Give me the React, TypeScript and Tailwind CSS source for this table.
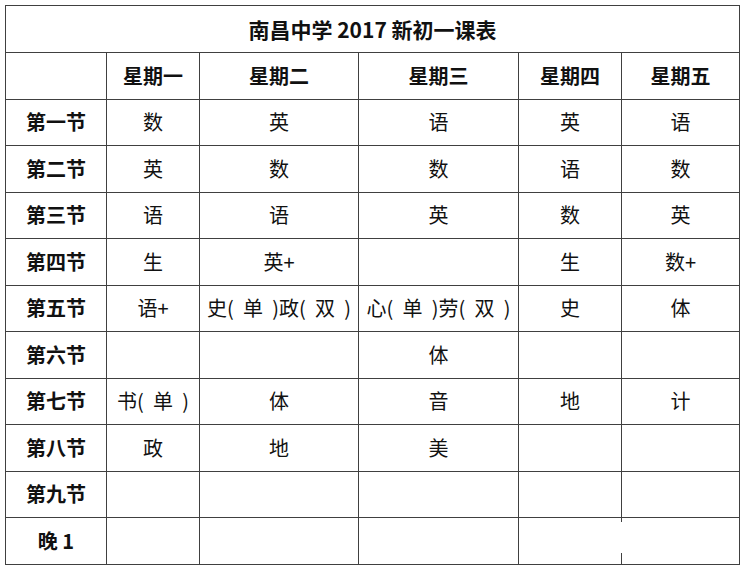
import React from 'react';

const days = ['星期一', '星期二', '星期三', '星期四', '星期五'];

const rows: [string, string[]][] = [
  ['第一节', ['数', '英', '语', '英', '语']],
  ['第二节', ['英', '数', '数', '语', '数']],
  ['第三节', ['语', '语', '英', '数', '英']],
  ['第四节', ['生', '英+', '', '生', '数+']],
  ['第五节', ['语+', '史(单)政(双)', '心(单)劳(双)', '史', '体']],
  ['第六节', ['', '', '体', '', '']],
  ['第七节', ['书(单)', '体', '音', '地', '计']],
  ['第八节', ['政', '地', '美', '', '']],
  ['第九节', ['', '', '', '', '']],
  ['晚 1', ['', '', '', '', '']],
];

// parens in the source sit at the outer side of their box, with room inside
const cellText = (s: string) =>
  s.split('').map((ch, i) => {
    if (ch === '(') return <span key={i} className="inline-block w-[16px] text-left">(</span>;
    if (ch === ')') return <span key={i} className="inline-block w-[16px] text-right">)</span>;
    return <span key={i}>{ch}</span>;
  });

const App: React.FC = () => {
  return (
    <div className="relative w-[744px] h-[569px] bg-white pt-[5px] pl-[5px] text-[#111] font-['Noto_Sans_CJK_SC','Noto_Sans',sans-serif]">
      <table className="table-fixed border-collapse w-[735px]">
        <colgroup>
          <col className="w-[101px]" />
          <col className="w-[93px]" />
          <col className="w-[159px]" />
          <col className="w-[160px]" />
          <col className="w-[103px]" />
          <col className="w-[118px]" />
        </colgroup>
        <tbody>
          <tr className="h-[47px]">
            <td colSpan={6} className="border border-[#404040] text-center text-[21px] font-bold leading-none">
              南昌中学 2017 新初一课表
            </td>
          </tr>
          <tr className="h-[46.5px]">
            <td className="border border-[#404040]"></td>
            {days.map((d) => (
              <td key={d} className="border border-[#404040] text-center text-[20px] font-bold leading-none">
                {d}
              </td>
            ))}
          </tr>
          {rows.map(([label, cells]) => (
            <tr key={label} className="h-[46.5px]">
              <td className="border border-[#404040] text-center text-[20px] font-bold leading-none">{label}</td>
              {cells.map((c, i) => (
                <td key={i} className="border border-[#404040] text-center text-[20px] leading-none whitespace-nowrap">
                  {cellText(c)}
                </td>
              ))}
            </tr>
          ))}
        </tbody>
      </table>
      {/* broken grid line in the last row */}
      <div className="absolute left-[619px] top-[522px] w-[3px] h-[31px] bg-white" />
    </div>
  );
};

export default App;
